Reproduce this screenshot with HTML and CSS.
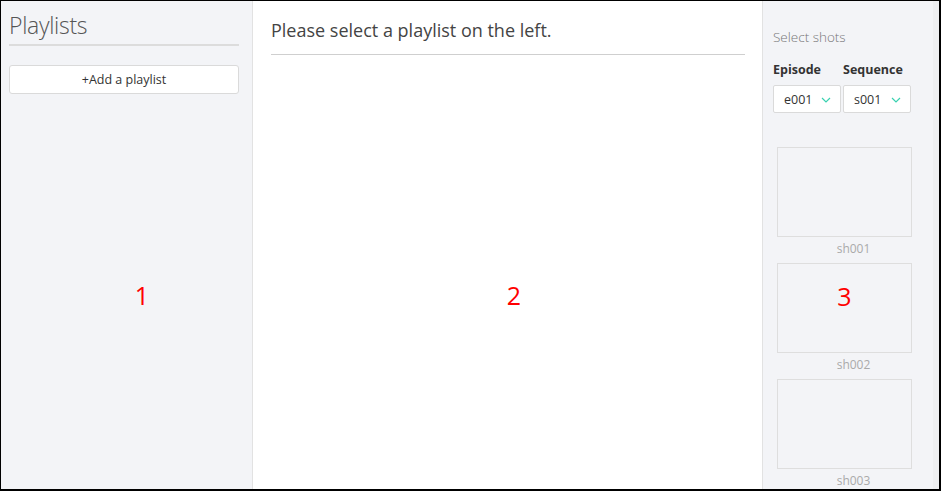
FILE: index.html
```html
<!DOCTYPE html>
<html>
<head>
<meta charset="utf-8">
<link rel="stylesheet" href="styles.css">
</head>
<body>
<div class="app">
  <aside class="left">
    <h1 class="title">Playlists</h1>
    <button class="add-btn">+Add a playlist</button>
    <div class="marker">1</div>
  </aside>
  <main class="middle">
    <h2 class="msg">Please select a playlist on the left.</h2>
    <div class="marker">2</div>
  </main>
  <aside class="right">
    <div class="right-inner">
      <div class="sel-title">Select shots</div>
      <div class="filters">
        <div class="filter">
          <div class="flabel">Episode</div>
          <div class="select">e001 <svg width="10" height="6" viewBox="0 0 10 6"><path d="M1 1l4 4 4-4" fill="none" stroke="#3ad1b0" stroke-width="1.2"/></svg></div>
        </div>
        <div class="filter">
          <div class="flabel">Sequence</div>
          <div class="select">s001 <svg width="10" height="6" viewBox="0 0 10 6"><path d="M1 1l4 4 4-4" fill="none" stroke="#3ad1b0" stroke-width="1.2"/></svg></div>
        </div>
      </div>
      <div class="shots">
        <div class="shot"><div class="thumb"></div><div class="sname">sh001</div></div>
        <div class="shot"><div class="thumb"><span class="marker3">3</span></div><div class="sname">sh002</div></div>
        <div class="shot"><div class="thumb"></div><div class="sname">sh003</div></div>
      </div>
    </div>
    <div class="scroll"></div>
  </aside>
</div>
</body>
</html>
```
FILE: styles.css
```css
* { box-sizing: border-box; }
html, body { margin: 0; padding: 0; background: #000; }
body { font-family: "Open Sans", "Noto Sans", sans-serif; }
.app {
  width: 941px;
  height: 491px;
  border-style: solid;
  border-color: #000;
  border-width: 1px 2px 2px 1px;
  display: flex;
  overflow: hidden;
}
.left {
  width: 252px;
  background: #f3f4f7;
  border-right: 1px solid #e2e2e2;
  padding: 0 13px 0 8px;
  display: flex;
  flex-direction: column;
}
.title {
  margin: 0;
  font-weight: 300;
  font-size: 23px;
  color: #555;
  line-height: 28px;
  padding-top: 10px;
  padding-bottom: 5px;
  border-bottom: 2px solid #dcdcdc;
  letter-spacing: -0.3px;
}
.add-btn {
  margin-top: 19px;
  height: 29px;
  background: #fff;
  border: 1px solid #dadada;
  border-radius: 3px;
  font-family: inherit;
  font-size: 12.5px;
  color: #333;
  padding: 0;
}
.marker {
  color: #ff0000;
  font-size: 25px;
  text-align: center;
  margin-top: auto;
  margin-bottom: 179px;
  line-height: 30px;
}
.left .marker { margin-left: 36px; }
.middle {
  width: 509px;
  background: #fff;
  padding: 0 17px 0 18px;
  display: flex;
  flex-direction: column;
}
.middle .marker { margin-right: -12px; }
.msg {
  margin: 0;
  font-weight: 400;
  font-size: 18px;
  color: #444;
  line-height: 24px;
  padding-top: 17px;
  padding-bottom: 12px;
  border-bottom: 1px solid #cfcfcf;
}
.right {
  flex: 1;
  background: #f3f4f7;
  border-left: 1px solid #e2e2e2;
  display: flex;
  overflow: hidden;
}
.right-inner {
  width: 170px;
  padding: 26px 0 0 10px;
}
.scroll {
  width: 6px;
  background: #eeeff1;
}
.sel-title {
  font-size: 13.5px;
  font-weight: 300;
  color: #777;
  line-height: 20px;
}
.filters {
  display: flex;
  gap: 2px;
  margin-top: 14px;
}
.flabel {
  font-size: 12.5px;
  font-weight: 700;
  color: #333;
  line-height: 18px;
  margin-bottom: 6px;
}
.filter:first-child .select { width: 68px; }
.filter:last-child .select { width: 68px; }
.select {
  height: 28px;
  background: #fff;
  border: 1px solid #dadada;
  border-radius: 2px;
  display: flex;
  align-items: center;
  justify-content: space-between;
  padding: 0 9px 0 10px;
  font-size: 12.5px;
  color: #333;
}
.select svg { margin-top: 2px; }
.shots {
  margin-top: 34px;
  padding-left: 4px;
  display: flex;
  flex-direction: column;
  gap: 4px;
}
.shot { width: 135px; }
.thumb {
  height: 90px;
  border: 1px solid #dedede;
  background: #f3f4f7;
  display: flex;
  justify-content: center;
  align-items: flex-start;
}
.marker3 {
  color: #ff0000;
  font-size: 25px;
  line-height: 30px;
  margin-top: 17px;
}
.sname {
  text-align: center;
  font-size: 12px;
  color: #aaa;
  line-height: 20px;
  margin-top: 2px;
  margin-right: -18px;
}
```
